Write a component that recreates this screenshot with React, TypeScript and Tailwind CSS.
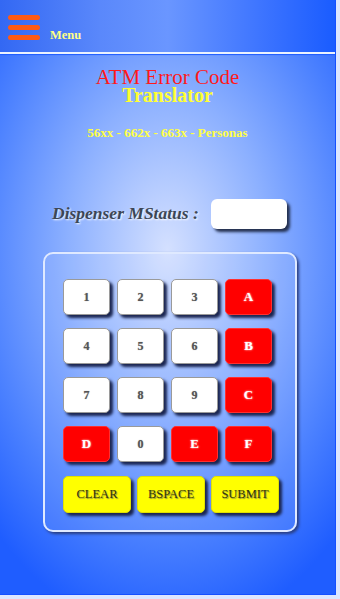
import type { ReactNode } from 'react';

const serif = { fontFamily: '"Liberation Serif", "DejaVu Serif", serif' };

function Key({ label, kind }: { label: string; kind: 'white' | 'red' }) {
  const look =
    kind === 'red'
      ? 'bg-[#ff0000] border-[#ff3030] text-white font-bold text-[13px] [text-shadow:0_0_2px_#ffffff]'
      : 'bg-white border-[#9a9a9a] text-[#555] font-bold text-[12px] [text-shadow:0_0_1px_#999]';
  return (
    <button
      className={`w-[47px] h-[36px] rounded-[5px] border flex items-center justify-center shadow-[3px_3px_3px_#1a2550] ${look}`}
      style={serif}
    >
      {label}
    </button>
  );
}

function Action({ children }: { children: ReactNode }) {
  return (
    <button
      className="w-[68px] h-[37px] rounded-[5px] bg-[#ffff00] border border-[#e0e000] flex items-center justify-center text-[12.5px] text-[#34340c] shadow-[3px_3px_3px_#1a2550] [text-shadow:1px_1px_1px_#8a8a40]"
      style={serif}
    >
      {children}
    </button>
  );
}

export default function App() {
  const rows: [string, 'white' | 'red'][][] = [
    [['1', 'white'], ['2', 'white'], ['3', 'white'], ['A', 'red']],
    [['4', 'white'], ['5', 'white'], ['6', 'white'], ['B', 'red']],
    [['7', 'white'], ['8', 'white'], ['9', 'white'], ['C', 'red']],
    [['D', 'red'], ['0', 'white'], ['E', 'red'], ['F', 'red']],
  ];

  return (
    <div className="w-[340px] h-[599px] bg-[#dde6ff] overflow-hidden">
      <div className="w-[336px] h-[595px] border-r border-b border-[#1550ff] flex flex-col bg-[radial-gradient(ellipse_75%_65%_at_50%_42%,#d4e0ff_0%,#8cb0ff_40%,#4a80ff_75%,#1f5dff_100%)]">
        {/* header */}
        <div className="h-[52px] flex items-end px-[8px] pb-[12px] gap-[10px] bg-[linear-gradient(90deg,#3368f3_0%,#5a88fb_30%,#6a96ff_50%,#3a72ff_80%,#1a5cff_100%)]">
          <div className="flex flex-col gap-[5px]">
            <span className="block w-[32px] h-[5px] rounded-full bg-[#ff5a14]" />
            <span className="block w-[32px] h-[5px] rounded-full bg-[#ff5a14]" />
            <span className="block w-[32px] h-[5px] rounded-full bg-[#ff5a14]" />
          </div>
          <span className="text-[12.5px] font-bold text-[#ffff88] leading-none mb-[-1px]" style={serif}>
            Menu
          </span>
        </div>
        <div className="h-[2px] bg-[#eaf2ff] shadow-[0_1px_1px_#1d5cff]" />

        {/* title */}
        <div className="flex flex-col items-center mt-[15px]" style={serif}>
          <div className="text-[21px] text-[#ff1a1a] leading-[17px]">ATM Error Code</div>
          <div className="text-[20px] font-bold text-[#ffff33] leading-[19px]">Translator</div>
          <div className="text-[13px] font-bold text-[#ffff44] mt-[18px]">56xx - 662x - 663x - Personas</div>
        </div>

        {/* status */}
        <div className="flex items-center mt-[56px] pl-[52px] gap-[12px]">
          <span
            className="text-[17.5px] italic font-bold text-[#3c4656] [text-shadow:1px_1px_2px_#ffffff]"
            style={serif}
          >
            Dispenser MStatus :
          </span>
          <div className="w-[76px] h-[30px] rounded-[6px] bg-white shadow-[3px_3px_3px_#24304f]" />
        </div>

        {/* keypad */}
        <div className="ml-[43px] mt-[23px] w-[254px] h-[280px] rounded-[10px] border-2 border-[#dfe9ff] bg-[#ffffff14] shadow-[2px_2px_3px_#2a3e80] pl-[18px] pt-[25px]">
          <div className="grid grid-cols-[repeat(4,47px)] gap-x-[7px] gap-y-[13px]">
            {rows.flat().map(([l, k]) => (
              <Key key={l} label={l} kind={k} />
            ))}
          </div>
          <div className="flex gap-[6px] mt-[14px]">
            <Action>CLEAR</Action>
            <Action>BSPACE</Action>
            <Action>SUBMIT</Action>
          </div>
        </div>
      </div>
    </div>
  );
}
